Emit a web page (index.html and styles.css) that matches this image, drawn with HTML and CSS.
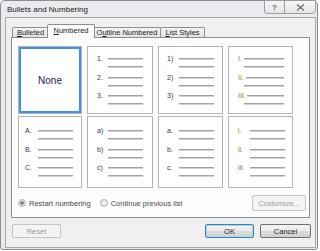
FILE: index.html
```html
<!DOCTYPE html>
<html lang="en">
<head>
  <meta charset="UTF-8">
  <title>Bullets and Numbering</title>
  <link rel="stylesheet" href="styles.css">
</head>
<body>
  <div class="window">
    <div class="titlebar">
      <span class="title">Bullets and Numbering</span>
    </div>
    <div class="caption-btns">
      <span class="cap-btn help">?</span>
      <span class="cap-btn close">
        <svg width="9" height="7" viewBox="0 0 9 7"><path d="M1 0.5 L8 6.5 M8 0.5 L1 6.5" stroke="#6a6a6a" stroke-width="1.1" fill="none"/></svg>
      </span>
    </div>

    <div class="client">
      <div class="tabs">
        <div class="tab t1"><u>B</u>ulleted</div>
        <div class="tab t2 active"><u>N</u>umbered</div>
        <div class="tab t3">O<u>u</u>tline Numbered</div>
        <div class="tab t4"><u>L</u>ist Styles</div>
      </div>

      <div class="pane">
        <div class="gallery">
          <div class="cell none">None</div>

          <div class="cell top s-num">
            <div class="item"><span class="lbl">1.</span><div class="lines"><i></i><i></i></div></div>
            <div class="item"><span class="lbl">2.</span><div class="lines"><i></i><i></i></div></div>
            <div class="item"><span class="lbl">3.</span><div class="lines"><i></i><i></i></div></div>
          </div>

          <div class="cell top s-paren">
            <div class="item"><span class="lbl">1)</span><div class="lines"><i></i><i></i></div></div>
            <div class="item"><span class="lbl">2)</span><div class="lines"><i></i><i></i></div></div>
            <div class="item"><span class="lbl">3)</span><div class="lines"><i></i><i></i></div></div>
          </div>

          <div class="cell top s-roman">
            <div class="item"><span class="lbl roman">I.</span><div class="lines"><i></i><i></i></div></div>
            <div class="item"><span class="lbl roman">II.</span><div class="lines"><i class="push1"></i><i></i></div></div>
            <div class="item"><span class="lbl roman">III.</span><div class="lines"><i class="push2"></i><i></i></div></div>
          </div>

          <div class="cell bottom s-upper">
            <div class="item"><span class="lbl">A.</span><div class="lines"><i></i><i></i></div></div>
            <div class="item"><span class="lbl">B.</span><div class="lines"><i></i><i></i></div></div>
            <div class="item"><span class="lbl">C.</span><div class="lines"><i></i><i></i></div></div>
          </div>

          <div class="cell bottom s-num">
            <div class="item"><span class="lbl">a)</span><div class="lines"><i></i><i></i></div></div>
            <div class="item"><span class="lbl">b)</span><div class="lines"><i></i><i></i></div></div>
            <div class="item"><span class="lbl">c)</span><div class="lines"><i></i><i></i></div></div>
          </div>

          <div class="cell bottom s-paren">
            <div class="item"><span class="lbl">a.</span><div class="lines"><i></i><i></i></div></div>
            <div class="item"><span class="lbl">b.</span><div class="lines"><i></i><i></i></div></div>
            <div class="item"><span class="lbl">c.</span><div class="lines"><i></i><i></i></div></div>
          </div>

          <div class="cell bottom s-lower">
            <div class="item"><span class="lbl roman">i.</span><div class="lines"><i></i><i></i></div></div>
            <div class="item"><span class="lbl roman">ii.</span><div class="lines"><i></i><i></i></div></div>
            <div class="item"><span class="lbl roman">iii.</span><div class="lines"><i></i><i></i></div></div>
          </div>
        </div>

        <div class="options">
          <label class="radio"><span class="dot checked"></span>Restart numbering</label>
          <label class="radio"><span class="dot"></span>Continue previous list</label>
          <button class="btn disabled customize">Cus<u>t</u>omize...</button>
        </div>
      </div>

      <div class="footer">
        <button class="btn disabled reset">R<u>e</u>set</button>
        <button class="btn default ok">OK</button>
        <button class="btn cancel">Cancel</button>
      </div>
    </div>
  </div>
</body>
</html>
```

FILE: styles.css
```css
body {
  margin: 0;
  background-color: #ffffff;
  font-family: "Liberation Sans", Arial, sans-serif;
  font-size: 7.5px;
  color: #1e1e1e;
}

.window {
  position: relative;
  box-sizing: border-box;
  width: 318px;
  height: 250px;
  padding: 0 1px 1px 4px;
  background-color: #e9ebee;
  border: 1px solid #8a8c90;
  border-radius: 5px 5px 3px 3px;
}

.titlebar {
  height: 16px;
  display: flex;
  align-items: center;
  padding-left: 2px;
}

.title {
  font-size: 8px;
  color: #1a1a1a;
}

/* caption buttons sit over the frame corner */
.caption-btns {
  position: absolute;
  top: -1px;
  right: 1px;
  display: flex;
}

.cap-btn {
  box-sizing: border-box;
  height: 14px;
  display: flex;
  align-items: center;
  justify-content: center;
  border: 1px solid #9a9da2;
  background: linear-gradient(#f6f7f8, #e4e6e9);
  color: #666;
  font-size: 8px;
  font-weight: bold;
}

.cap-btn.help {
  width: 20px;
  border-radius: 0 0 0 4px;
  border-right: none;
}

.cap-btn.close {
  width: 32px;
  border-radius: 0 0 4px 0;
}

.client {
  box-sizing: border-box;
  height: 231px;
  padding: 0 5px;
  background-color: #f0f0f0;
  border: 1px solid #a5a8ac;
}

.tabs {
  display: flex;
  align-items: flex-end;
  height: 13px;
  margin-top: 6px;
  padding-left: 1px;
}

.tab {
  box-sizing: border-box;
  height: 10px;
  margin-left: -1px;
  display: flex;
  align-items: center;
  justify-content: center;
  border: 1px solid #8c8e94;
  border-bottom: none;
  background: linear-gradient(#f4f4f4, #e3e3e3);
  border-radius: 2px 2px 0 0;
  line-height: 1;
}

.tab.t1 { width: 37px; margin-left: 0; }
.tab.t3 { width: 68px; }
.tab.t4 { width: 45px; }

.tab.active {
  position: relative;
  z-index: 1;
  width: 48px;
  height: 14px;
  margin-bottom: -1px;
  margin-left: -2px;
  margin-right: -1px;
  padding-bottom: 2px;
  background: #fcfcfc;
}

.pane {
  box-sizing: border-box;
  height: 181px;
  background-color: #fcfcfc;
  border: 1px solid #8c8e94;
  padding: 8px 3px 0 5px;
}

.gallery {
  display: grid;
  grid-template-columns: 64px 66px 65px 65px;
  grid-template-rows: 68px 72px;
  column-gap: 5px;
  row-gap: 2px;
  padding-left: 1px;
}

.cell {
  --lbl: 11px;
  --len: 35px;
  box-sizing: border-box;
  background-color: #ffffff;
  border: 1px solid #b4b4b4;
  padding-left: 9px;
}

.cell.top { padding-top: 8px; }
.cell.bottom { padding-top: 10px; }

.cell.none {
  display: flex;
  align-items: center;
  justify-content: center;
  font-size: 10px;
  color: #1c1c48;
  box-shadow: inset 0 0 0 2px #3c90f0;
  padding-left: 0;
}

.s-num { padding-left: 9px; --lbl: 11px; }
.s-paren { padding-left: 8px; --lbl: 12px; }
.s-roman { padding-left: 9px; --lbl: 6px; --len: 40px; }
.s-upper { padding-left: 6px; --lbl: 13px; }
.s-lower { padding-left: 9px; --lbl: 12px; }

.item {
  display: flex;
  height: 18.5px;
}

.lbl {
  width: var(--lbl);
  flex-shrink: 0;
  font-size: 7px;
  line-height: 8px;
  height: 8px;
  color: #2b3558;
  white-space: nowrap;
}

.lbl.roman { color: #a0712e; }

.lines {
  width: var(--len);
  padding-top: 3px;
}

.lines i {
  display: block;
  height: 0;
  border-top: 1px solid #a2a2a2;
  border-bottom: 1px solid #d2d2d2;
}

.lines i + i { margin-top: 6px; }

.lines i.push1 { margin-left: 2px; }
.lines i.push2 { margin-left: 3px; }

.options {
  display: flex;
  align-items: center;
  margin-top: 7px;
  padding-left: 1px;
}

.radio {
  display: flex;
  align-items: center;
  color: #4a4a4a;
  margin-right: 9px;
}

.dot {
  box-sizing: border-box;
  width: 8px;
  height: 8px;
  margin-right: 3px;
  border: 1px solid #b0b0b0;
  border-radius: 50%;
  background: radial-gradient(#f4f4f4, #e2e2e2);
}

.dot.checked {
  background: radial-gradient(circle, #8c8c8c 0, #8c8c8c 1.6px, #ececec 2.2px);
}

.btn {
  box-sizing: border-box;
  height: 14px;
  padding: 0;
  font-family: "Liberation Sans", Arial, sans-serif;
  font-size: 7.5px;
  color: #1e1e1e;
  border: 1px solid #707070;
  border-radius: 2px;
  background: linear-gradient(#f2f2f2 0%, #ebebeb 50%, #dddddd 51%, #cfcfcf 100%);
}

.btn u { text-decoration: none; }

.btn.disabled {
  color: #9a9a9a;
  border-color: #c2c4c6;
  background: #f4f4f4;
}

.btn.default {
  border-color: #3c7fb1;
  box-shadow: inset 0 0 0 1px #a6d6f2;
}

.customize {
  width: 54px;
  height: 16px;
  margin-left: auto;
}

.footer {
  display: flex;
  margin-top: 6px;
  padding-left: 1px;
}

.reset { width: 49px; }

.ok {
  width: 49px;
  margin-left: auto;
}

.cancel {
  width: 51px;
  margin-left: 6px;
  margin-right: -1px;
}
```
